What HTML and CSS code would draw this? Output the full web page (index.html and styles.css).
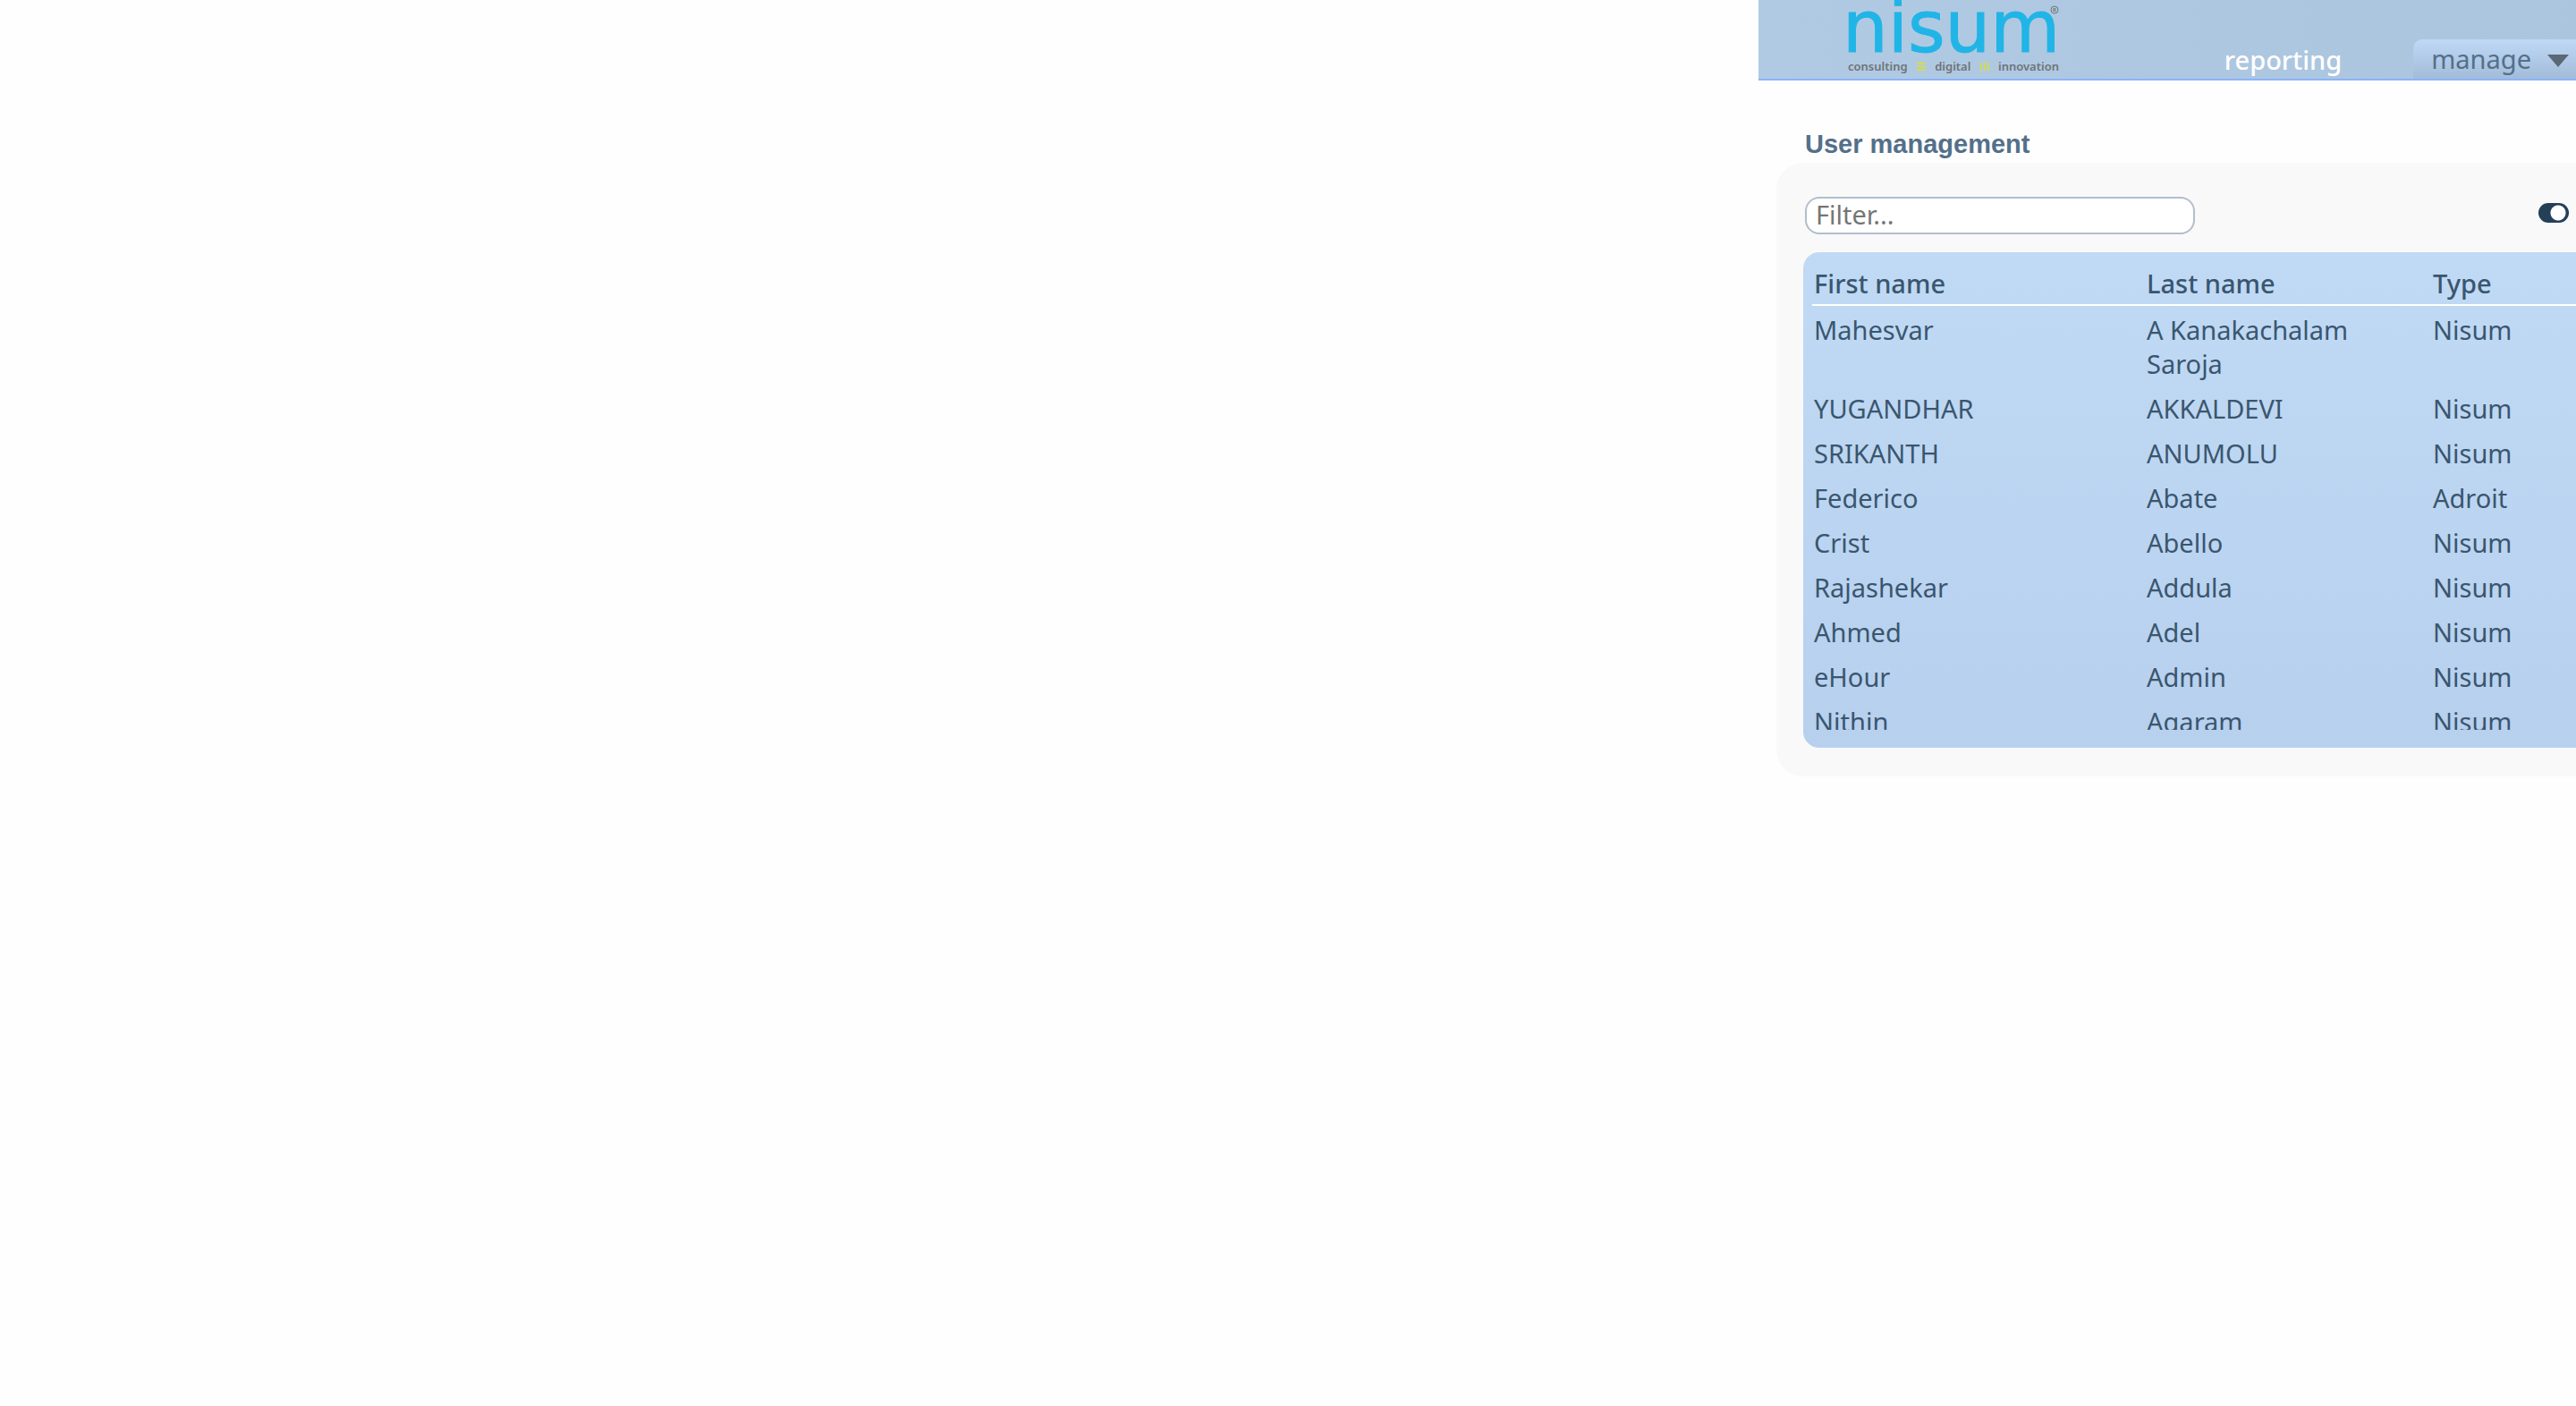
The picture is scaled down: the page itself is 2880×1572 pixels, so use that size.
FILE: index.html
```html
<!DOCTYPE html>
<html lang="en">
<head>
<meta charset="utf-8">
<title>User management</title>
<link rel="stylesheet" href="styles.css">
</head>
<body>
<div class="page">
  <header class="topbar">
    <a class="logo" href="#" aria-label="nisum">
      <svg class="logo-mark" viewBox="0 0 240 60" aria-hidden="true">
        <text class="logo-word" x="-6" y="58">nisum</text>
        <circle class="logo-reg-ring" cx="231" cy="11" r="4"/>
        <text class="logo-reg" x="229" y="13">R</text>
      </svg>
      <span class="tagline">
        <span>consulting</span>
        <svg class="bars" viewBox="0 0 10 9"><path d="M0 1h10M0 4.5h10M0 8h10"/></svg>
        <span>digital</span>
        <svg class="bars" viewBox="0 0 10 9"><path d="M1 0v9M5 0v9M9 0v9"/></svg>
        <span>innovation</span>
      </span>
    </a>
    <nav class="menu">
      <a class="menu-link" href="#">reporting</a>
      <button class="menu-tab" type="button">manage
        <svg class="caret" viewBox="0 0 24 14"><path d="M0 0h24L12 14z"/></svg>
      </button>
    </nav>
  </header>
  <main class="content">
    <h1 class="title">User management</h1>
    <section class="panel">
      <div class="toolbar">
        <input class="filter" type="text" placeholder="Filter..." aria-label="Filter">
        <input class="toggle" type="checkbox" checked aria-label="Hide inactive users">
      </div>
      <div class="list">
        <div class="scroller">
          <table class="users">
            <thead>
              <tr><th class="col-first">First name</th><th class="col-last">Last name</th><th>Type</th></tr>
            </thead>
            <tbody>
              <tr><td>Mahesvar</td><td>A Kanakachalam Saroja</td><td>Nisum</td></tr>
              <tr><td>YUGANDHAR</td><td>AKKALDEVI</td><td>Nisum</td></tr>
              <tr><td>SRIKANTH</td><td>ANUMOLU</td><td>Nisum</td></tr>
              <tr><td>Federico</td><td>Abate</td><td>Adroit</td></tr>
              <tr><td>Crist</td><td>Abello</td><td>Nisum</td></tr>
              <tr><td>Rajashekar</td><td>Addula</td><td>Nisum</td></tr>
              <tr><td>Ahmed</td><td>Adel</td><td>Nisum</td></tr>
              <tr><td>eHour</td><td>Admin</td><td>Nisum</td></tr>
              <tr><td>Nithin</td><td>Agaram</td><td>Nisum</td></tr>
            </tbody>
          </table>
        </div>
      </div>
    </section>
  </main>
</div>
</body>
</html>
```
FILE: styles.css
```css
* { box-sizing: border-box; }

body {
  margin: 0;
  background: #fefefe;
  font-family: "Noto Sans", sans-serif;
  font-size: 29px;
  line-height: 38px;
  color: #3a566e;
}

.page {
  display: grid;
  grid-template-columns: 983fr 457fr;
}

.topbar {
  grid-column: 2;
  display: flex;
  justify-content: space-between;
  height: 90px;
  padding-left: 100px;
  border-bottom: 2px solid #8bb2fb;
  background: linear-gradient(to right, #b1cae4, #abc5de);
}

.logo {
  display: flex;
  flex-direction: column;
  width: 240px;
  text-decoration: none;
}

.logo-mark {
  display: block;
  height: 60px;
  overflow: visible;
}

.logo-word {
  font-family: "DejaVu Sans", sans-serif;
  font-size: 80px;
  fill: #20b5e6;
  stroke: #20b5e6;
  stroke-width: 1;
}

.logo-reg {
  font-size: 6px;
  font-weight: 700;
  fill: #6f7377;
}

.logo-reg-ring {
  fill: none;
  stroke: #6f7377;
}

.tagline {
  display: flex;
  align-items: center;
  justify-content: space-between;
  width: 236px;
  font-size: 13px;
  font-weight: 600;
  line-height: 28px;
  color: #6f7377;
}

.bars {
  width: 10px;
  height: 9px;
  stroke: #d2dc50;
  stroke-width: 2;
}

.menu {
  display: flex;
  align-items: flex-end;
  gap: 80px;
}

.menu-link {
  line-height: 42px;
  font-weight: 500;
  color: #fff;
  text-decoration: none;
}

.menu-tab {
  display: flex;
  align-items: center;
  gap: 18px;
  height: 44px;
  padding: 0 8px 0 20px;
  border: 0;
  border-radius: 10px 0 0 0;
  background: linear-gradient(#bfd8f6, #a2bcd8);
  font: inherit;
  line-height: 44px;
  color: #53708a;
}

.caret {
  width: 24px;
  height: 14px;
  margin-top: 4px;
  fill: #596874;
}

.content {
  grid-column: 2;
  padding: 50px 0 0 20px;
}

.title {
  margin: 0;
  padding-left: 32px;
  font-family: "Liberation Sans", sans-serif;
  font-size: 29px;
  font-weight: 700;
  line-height: 42px;
  color: #53708a;
}

.panel {
  padding: 38px 0 32px 30px;
  border-radius: 30px 0 0 30px;
  background: #f9f9f9;
}

.toolbar {
  display: flex;
  justify-content: space-between;
  padding: 0 8px 20px 2px;
}

.filter {
  width: 436px;
  height: 42px;
  padding: 0 10px 4px;
  border: 2px solid #b0bfcd;
  border-radius: 16px;
  background: #fff;
  font: inherit;
  line-height: 34px;
  color: #3a566e;
}

.filter::placeholder {
  color: #757575;
}

.toggle {
  appearance: none;
  width: 34px;
  height: 22px;
  margin: 7px 0 0;
  border-radius: 11px;
  background: radial-gradient(circle at 22px 11px, #fff 8px, #243f58 9px);
}

.list {
  padding: 10px 0 20px 10px;
  border-radius: 18px 0 0 18px;
  background: linear-gradient(#c0daf5, #b7d0ee);
}

.scroller {
  max-height: 524px;
  overflow: hidden;
}

.users {
  width: 100%;
  table-layout: fixed;
  border-collapse: separate;
  border-spacing: 0;
}

.users th {
  padding: 6px 8px 4px 2px;
  border-bottom: 2px solid #fff;
  font-weight: 500;
  text-align: left;
}

.users td {
  padding: 8px 8px 4px 2px;
  vertical-align: top;
}

.col-first { width: 372px; }
.col-last { width: 320px; }
```
